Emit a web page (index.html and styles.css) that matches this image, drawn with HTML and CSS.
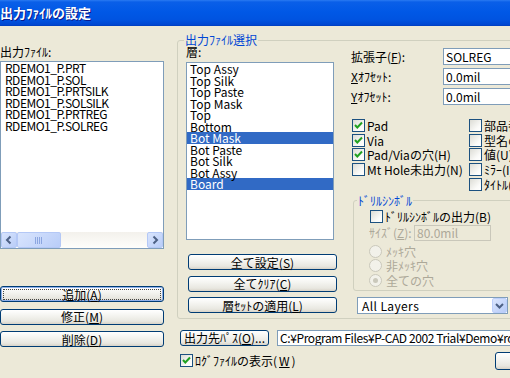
FILE: index.html
```html
<!doctype html>
<html>
  <head>
    <meta charset="utf-8">
    <link rel="stylesheet" href="styles.css">
  </head>
  <body>
    <div class="titlebar">出力ﾌｧｲﾙの設定</div>

    <div class="client">
      <div class="files-col">
        <div class="label">出力ﾌｧｲﾙ:</div>
        <div class="listbox files">
          <div class="items">
            <div class="item">RDEMO1_P.PRT</div>
            <div class="item">RDEMO1_P.SOL</div>
            <div class="item">RDEMO1_P.PRTSILK</div>
            <div class="item">RDEMO1_P.SOLSILK</div>
            <div class="item">RDEMO1_P.PRTREG</div>
            <div class="item">RDEMO1_P.SOLREG</div>
          </div>
          <div class="hscroll">
            <div class="sb-btn">
              <svg width="14" height="14" viewBox="0 0 14 14"><path d="M8.5 3.5 L5 7 L8.5 10.5" fill="none" stroke="#4d6185" stroke-width="2"/></svg>
            </div>
            <div class="sb-thumb">
              <svg width="8" height="7" viewBox="0 0 8 7"><path d="M0.5 0 V7 M2.5 0 V7 M4.5 0 V7 M6.5 0 V7" stroke="#8ca6e0" stroke-width="1"/></svg>
            </div>
            <div class="sb-track"></div>
            <div class="sb-btn">
              <svg width="14" height="14" viewBox="0 0 14 14"><path d="M5.5 3.5 L9 7 L5.5 10.5" fill="none" stroke="#4d6185" stroke-width="2"/></svg>
            </div>
          </div>
        </div>
        <div class="btn-stack">
          <button class="btn default"><span>追加(<u>A</u>)</span></button>
          <button class="btn">修正(<u>M</u>)</button>
          <button class="btn">削除(<u>D</u>)</button>
        </div>
      </div>

      <div class="main-col">
        <fieldset class="group output">
          <legend>出力ﾌｧｲﾙ選択</legend>
          <div class="group-body">
            <div class="layers-col">
              <div class="label">層:</div>
              <div class="listbox layers">
                <div class="item">Top Assy</div>
                <div class="item">Top Silk</div>
                <div class="item">Top Paste</div>
                <div class="item">Top Mask</div>
                <div class="item">Top</div>
                <div class="item">Bottom</div>
                <div class="item selected">Bot Mask</div>
                <div class="item">Bot Paste</div>
                <div class="item">Bot Silk</div>
                <div class="item">Bot Assy</div>
                <div class="item selected">Board</div>
              </div>
              <div class="btn-stack layer-btns">
                <button class="btn">全て設定(<u>S</u>)</button>
                <button class="btn">全てｸﾘｱ(<u>C</u>)</button>
                <button class="btn">層ｾｯﾄの適用(<u>L</u>)</button>
              </div>
            </div>

            <div class="options-col">
              <div class="field-row">
                <span class="field-label">拡張子(<u>F</u>):</span>
                <span class="textbox">SOLREG</span>
              </div>
              <div class="field-row">
                <span class="field-label"><u>X</u>ｵﾌｾｯﾄ:</span>
                <span class="textbox">0.0mil</span>
              </div>
              <div class="field-row">
                <span class="field-label"><u>Y</u>ｵﾌｾｯﾄ:</span>
                <span class="textbox">0.0mil</span>
              </div>

              <div class="checks">
                <div class="check-col left">
                  <div class="check-row"><span class="check on"><svg width="11" height="11" viewBox="0 0 11 11"><path d="M2 5 L4.3 7.5 L9 2.5" fill="none" stroke="#21a121" stroke-width="2"/></svg></span>Pad</div>
                  <div class="check-row"><span class="check on"><svg width="11" height="11" viewBox="0 0 11 11"><path d="M2 5 L4.3 7.5 L9 2.5" fill="none" stroke="#21a121" stroke-width="2"/></svg></span>Via</div>
                  <div class="check-row"><span class="check on"><svg width="11" height="11" viewBox="0 0 11 11"><path d="M2 5 L4.3 7.5 L9 2.5" fill="none" stroke="#21a121" stroke-width="2"/></svg></span>Pad/Viaの穴(H)</div>
                  <div class="check-row"><span class="check"></span>Mt Hole未出力(N)</div>
                </div>
                <div class="check-col">
                  <div class="check-row"><span class="check"></span>部品番号(R)</div>
                  <div class="check-row"><span class="check"></span>型名の出力(T)</div>
                  <div class="check-row"><span class="check"></span>値(U)</div>
                  <div class="check-row"><span class="check"></span>ﾐﾗｰ(I)</div>
                  <div class="check-row"><span class="check"></span>ﾀｲﾄﾙ(E)</div>
                </div>
              </div>

              <fieldset class="group drill">
                <legend>ﾄﾞﾘﾙｼﾝﾎﾞﾙ</legend>
                <div class="check-row drill-out"><span class="check"></span>ﾄﾞﾘﾙｼﾝﾎﾞﾙの出力(B)</div>
                <div class="size-row disabled">
                  <span class="size-label">ｻｲｽﾞ(<u>Z</u>):</span>
                  <span class="textbox off">80.0mil</span>
                </div>
                <div class="radio-row disabled"><span class="radio"></span>ﾒｯｷ穴</div>
                <div class="radio-row disabled"><span class="radio"></span>非ﾒｯｷ穴</div>
                <div class="radio-row disabled"><span class="radio on"></span>全ての穴</div>
              </fieldset>

              <div class="combo">
                <span class="combo-text">All Layers</span>
                <span class="combo-btn">
                  <svg width="15" height="15" viewBox="0 0 15 15"><path d="M4 6 L7.5 9.5 L11 6" fill="none" stroke="#4d6185" stroke-width="2"/></svg>
                </span>
              </div>
            </div>
          </div>
        </fieldset>

        <div class="path-row">
          <button class="btn path-btn">出力先ﾊﾟｽ(<u>O</u>)...</button>
          <span class="textbox path">C:¥Program Files¥P-CAD 2002 Trial¥Demo¥rdemo1.pcb</span>
        </div>

        <div class="log-row">
          <div class="check-row"><span class="check on"><svg width="11" height="11" viewBox="0 0 11 11"><path d="M2 5 L4.3 7.5 L9 2.5" fill="none" stroke="#21a121" stroke-width="2"/></svg></span>ﾛｸﾞﾌｧｲﾙの表示(<u>W</u>)</div>
          <button class="btn ok-btn">OK</button>
        </div>
      </div>
    </div>
  </body>
</html>
```

FILE: styles.css
```css
body {
  margin: 0;
  width: 510px;
  height: 378px;
  overflow: hidden;
  background-color: #ece9d8;
  font-family: "Noto Sans CJK JP", sans-serif;
  font-size: 12px;
  color: #000;
}

.titlebar {
  height: 26px;
  line-height: 26px;
  background: linear-gradient(#2a7af2 0, #0a5fe8 2px, #0058e6 12px, #0053e0 20px, #0046d0 25px, #003bb8 26px);
  color: #fff;
  font-weight: bold;
  font-size: 13px;
  text-shadow: 1px 1px #0a1a8c;
  white-space: nowrap;
}

.client {
  display: flex;
  align-items: flex-start;
}

.label {
  line-height: 12px;
  white-space: nowrap;
}

/* left column: file list */
.files-col {
  width: 164px;
  flex-shrink: 0;
  padding-top: 20px;
  display: flex;
  flex-direction: column;
}

.listbox {
  border: 1px solid #7f9db9;
  background-color: #fff;
  box-sizing: border-box;
  overflow: hidden;
}

.item {
  height: 11.5px;
  line-height: 11.5px;
  white-space: nowrap;
}

.files {
  margin-top: 3px;
  height: 188px;
  display: flex;
  flex-direction: column;
}

.files .items {
  flex: 1;
  padding-left: 4px;
  letter-spacing: -0.5px;
}

.hscroll {
  height: 16px;
  display: flex;
  background: linear-gradient(#f3f1ec, #fefefb);
}

.sb-btn,
.sb-thumb {
  box-sizing: border-box;
  height: 16px;
  border: 1px solid #b4c8f6;
  border-radius: 2px;
  background: linear-gradient(135deg, #d8e4fd, #b9cdf8);
  display: flex;
  align-items: center;
  justify-content: center;
}

.sb-btn {
  width: 16px;
}

.sb-thumb {
  width: 44px;
}

.sb-track {
  flex: 1;
}

/* buttons */
.btn {
  box-sizing: border-box;
  height: 16px;
  padding: 0;
  border: 1px solid #003c74;
  border-radius: 3px;
  background: linear-gradient(#ffffff, #f4f4f0 40%, #e8e7e0 80%, #d8d3c8);
  font: inherit;
  line-height: 13px;
  color: #000;
  text-align: center;
  white-space: nowrap;
}

.btn.default {
  box-shadow: inset 0 0 0 1px #8fb0ea;
}

.btn.default span {
  display: block;
  margin: 1px 2px;
  border: 1px dotted #444;
  line-height: 9px;
}

.btn-stack {
  margin-top: 37px;
  display: flex;
  flex-direction: column;
  gap: 6.5px;
}

/* main group */
.main-col {
  width: 393px;
  flex-shrink: 0;
  margin-left: 13px;
}

.group {
  margin: 0;
  border: 1px solid #d0d0bf;
  border-radius: 3px;
  min-width: 0;
}

.group legend {
  padding: 0 1px;
  margin-left: -2px;
  color: #0046d5;
  line-height: 12px;
  white-space: nowrap;
}

.output {
  margin-top: 8px;
  padding: 0 4px 4px 8px;
}

.group-body {
  display: flex;
}

.layers-col {
  width: 151px;
  flex-shrink: 0;
  display: flex;
  flex-direction: column;
}

.layers {
  margin-top: 4px;
  width: 148px;
  height: 178px;
}

.layers .item {
  padding-left: 3px;
}

.layers .item.selected {
  background-color: #316ac5;
  color: #fff;
}

.layer-btns {
  margin-top: 14px;
  margin-left: 2px;
  gap: 5.5px;
}

.options-col {
  margin-left: 14px;
  flex: 1;
  min-width: 0;
}

.field-row {
  display: flex;
  align-items: center;
  height: 17px;
  margin-top: 3px;
  white-space: nowrap;
}

.field-row:first-child {
  margin-top: 2px;
}

.field-label {
  width: 92px;
  flex-shrink: 0;
}

.textbox {
  box-sizing: border-box;
  display: block;
  height: 17px;
  width: 110px;
  padding: 0 2px;
  border: 1px solid #7f9db9;
  background-color: #fff;
  line-height: 15px;
  white-space: nowrap;
  overflow: hidden;
}

.checks {
  display: flex;
  margin-top: 13.4px;
}

.check-col {
  display: flex;
  flex-direction: column;
}

.check-col.left {
  width: 117px;
}

.check-row {
  height: 14.6px;
  display: flex;
  align-items: center;
  gap: 2px;
  padding-left: 1px;
  white-space: nowrap;
}

.check {
  box-sizing: border-box;
  width: 13px;
  height: 13px;
  flex-shrink: 0;
  border: 1px solid #1c5180;
  background: linear-gradient(135deg, #dcdcd5, #fbfbf9 70%, #fff);
  display: flex;
  align-items: center;
  justify-content: center;
}

/* drill symbol group */
.drill {
  margin-top: 3.6px;
  margin-left: 2px;
  padding: 0 6px 2.5px 5px;
}

.drill-out {
  margin-top: 3px;
  margin-left: 10px;
  height: 14px;
}

.size-row {
  display: flex;
  align-items: center;
  height: 16px;
  margin-top: 1px;
  margin-left: 10px;
}

.size-label {
  width: 45px;
}

.textbox.off {
  width: 77px;
  height: 16px;
  line-height: 14px;
  border-color: #c9c7ba;
  background-color: #ece9d8;
}

.disabled {
  color: #aca899;
}

.radio-row {
  height: 14.5px;
  display: flex;
  align-items: center;
  gap: 4px;
  margin-left: 10px;
  white-space: nowrap;
}

.size-row + .radio-row {
  margin-top: 3px;
}

.radio {
  box-sizing: border-box;
  width: 13px;
  height: 13px;
  border: 1px solid #cac8bb;
  border-radius: 50%;
  background-color: #f2f1ea;
  display: flex;
  align-items: center;
  justify-content: center;
}

.radio.on::after {
  content: "";
  width: 5px;
  height: 5px;
  border-radius: 50%;
  background-color: #cac8bb;
}

.combo {
  box-sizing: border-box;
  display: flex;
  align-items: center;
  width: 151px;
  height: 17px;
  margin: 6px 0 0 6px;
  border: 1px solid #7f9db9;
  background-color: #fff;
}

.combo-text {
  flex: 1;
  padding-left: 4px;
  line-height: 15px;
  letter-spacing: 0.4px;
}

.combo-btn {
  box-sizing: border-box;
  width: 15px;
  height: 15px;
  border: 1px solid #bccffb;
  border-radius: 2px;
  background: linear-gradient(135deg, #dbe6fe, #b7cbf7);
  display: flex;
  align-items: center;
  justify-content: center;
}

.combo-btn svg {
  margin: -1px;
}

/* bottom rows */
.path-row {
  display: flex;
  align-items: center;
  margin-top: 11px;
  margin-left: 3px;
}

.path-btn {
  width: 89px;
}

.textbox.path {
  margin-left: 8px;
  width: 290px;
  height: 16px;
  line-height: 14px;
  letter-spacing: -0.4px;
}

.log-row {
  display: flex;
  align-items: center;
  height: 18px;
  margin-top: 6px;
  margin-left: 2px;
}

.ok-btn {
  margin-left: auto;
  width: 75px;
  height: 18px;
}
```
